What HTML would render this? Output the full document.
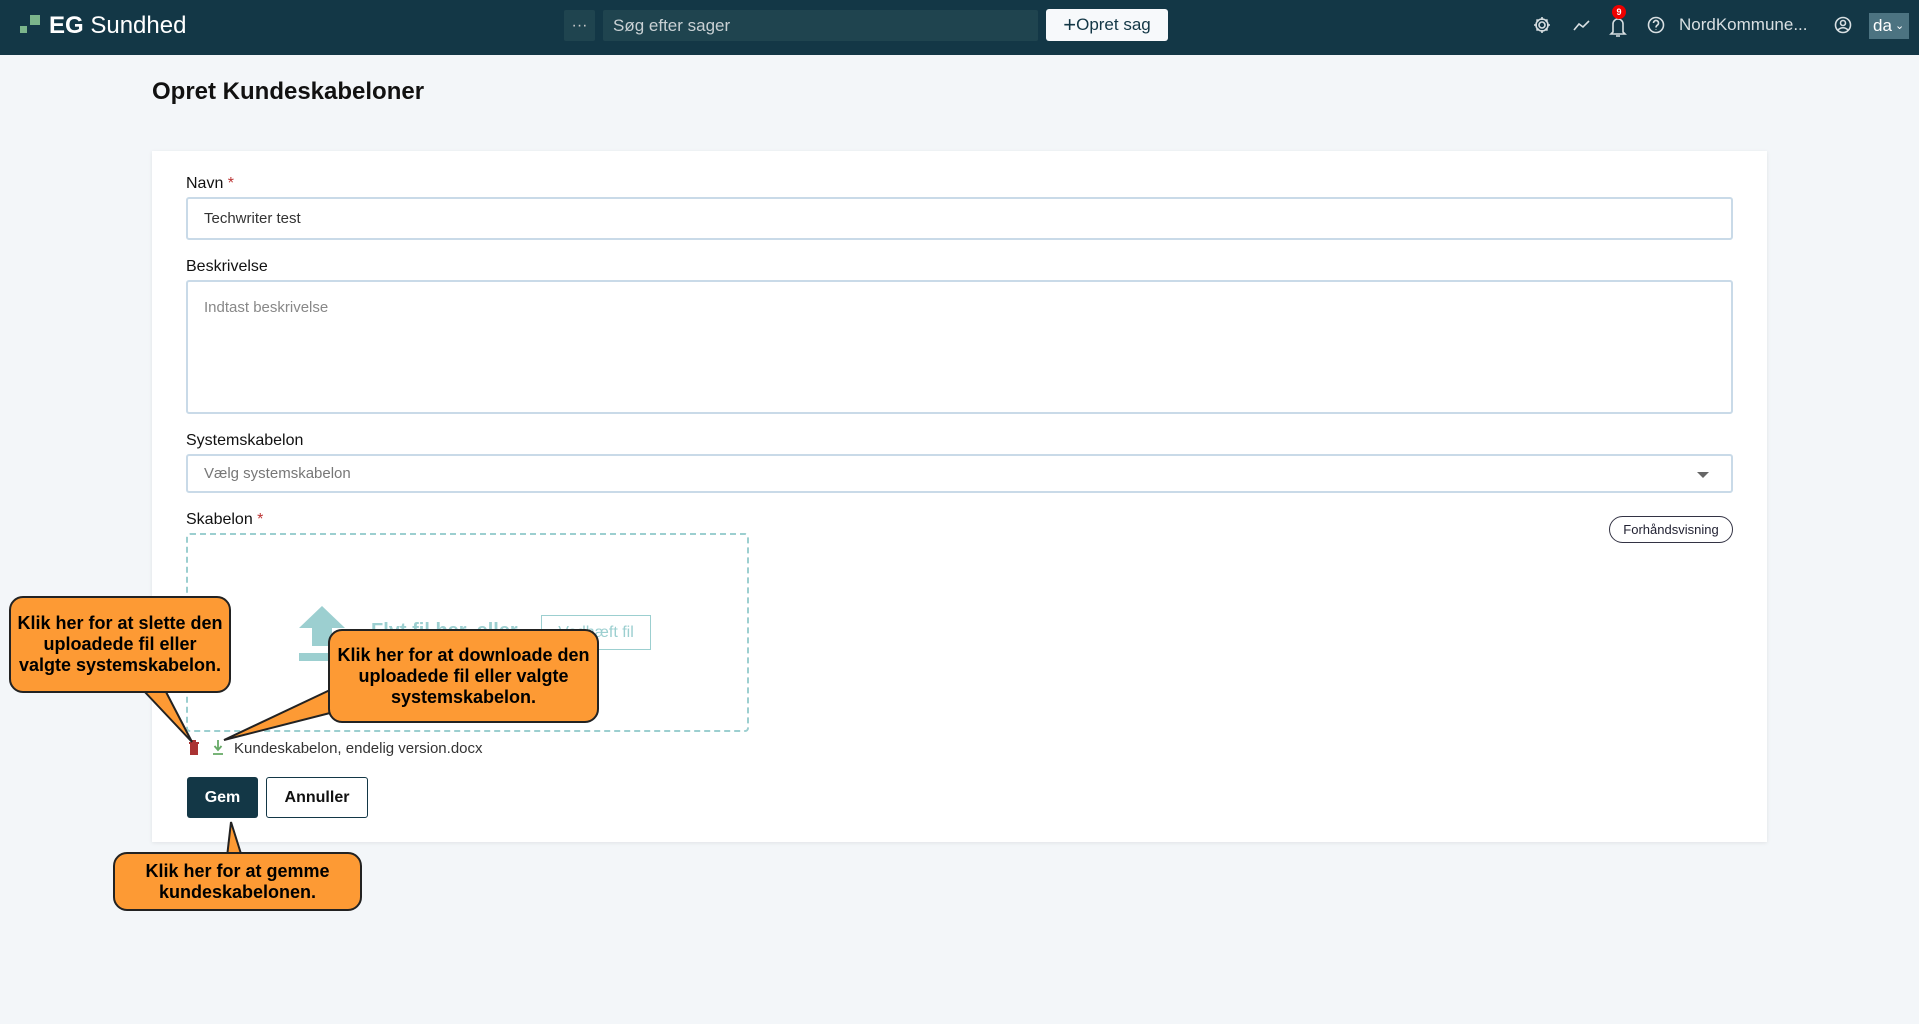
<!DOCTYPE html>
<html><head><meta charset="utf-8"><style>
*{box-sizing:border-box;margin:0;padding:0}
body{width:1919px;height:1024px;background:#f3f6f9;font-family:"Liberation Sans",sans-serif;position:relative;overflow:hidden;color:#111}
.abs{position:absolute}
.hdr{left:0;top:0;width:1919px;height:55px;background:#133746}
.lbl{font-size:16px;color:#111}
.inp{background:#fff;border:2px solid #c9dae8;border-radius:3px}
.call{position:absolute;background:#fd9a34;border:2px solid #222;border-radius:14px;font-weight:bold;font-size:18px;line-height:21px;text-align:center;color:#000;display:flex;align-items:center;justify-content:center}
</style></head><body>
<div class="abs hdr"></div>
<div class="abs" style="left:20px;top:26px;width:7px;height:7px;background:#7bb58b"></div>
<div class="abs" style="left:30px;top:15px;width:10px;height:10px;background:#7bb58b"></div>
<div class="abs" style="left:49px;top:11px;color:#fff;font-size:24px;line-height:30px"><b>EG</b> Sundhed</div>
<div class="abs" style="left:564px;top:10px;width:31px;height:31px;background:#1f444f;border-radius:2px;color:#ccc;text-align:center;font-size:16px;line-height:31px">···</div>
<div class="abs" style="left:603px;top:10px;width:435px;height:31px;background:#1f444f;border-radius:2px;color:#c9d1d4;font-size:17px;line-height:31px;padding-left:10px">Søg efter sager</div>
<div class="abs" style="left:1046px;top:9px;width:122px;height:32px;background:#f7f9fb;border-radius:3px;color:#133746;font-size:17px;line-height:32px;text-align:center"><span style="font-size:22px;vertical-align:-2px">+</span>Opret sag</div>
<svg class="abs" style="left:1532px;top:14px" width="390" height="30" viewBox="0 0 390 30" fill="none" stroke="#d8dfe2" stroke-width="1.6">
<circle cx="10" cy="11" r="3"/><path d="M10 3v3M10 16v3M2 11h3M15 11h3M4.5 5.5l2 2M13.5 14.5l2 2M4.5 16.5l2-2M13.5 7.5l2-2"/><circle cx="10" cy="11" r="6"/>
<path d="M42 16l5-6 4 3 6-6"/>
<path d="M81 18V10a5 5 0 0110 0v8l2 2H79zM84 22h4"/>
<circle cx="124" cy="11" r="7.5"/><path d="M121.5 9a2.5 2.5 0 114 2c-1 .7-1.5 1-1.5 2.5M124 15.5v.5"/>
<circle cx="311" cy="11" r="7.5"/><circle cx="311" cy="9" r="2.5"/><path d="M306 16c3-3 7-3 10 0"/>
</svg>
<div class="abs" style="left:1612px;top:5px;width:14px;height:14px;border-radius:7px;background:#e00;color:#fff;font-size:9px;line-height:14px;text-align:center;font-weight:bold">9</div>
<div class="abs" style="left:1679px;top:14px;color:#d8dfe2;font-size:17px;line-height:22px">NordKommune...</div>
<div class="abs" style="left:1869px;top:13px;width:40px;height:26px;background:#4c7381;color:#fff;font-size:17px;line-height:26px;padding-left:4px">da<span style="font-size:11px;vertical-align:2px"> ⌄</span></div>

<div class="abs" style="left:152px;top:78px;font-size:24px;font-weight:bold;color:#111">Opret Kundeskabeloner</div>
<div class="abs" style="left:152px;top:151px;width:1615px;height:691px;background:#fff;box-shadow:0 1px 4px rgba(0,0,0,.08)"></div>

<div class="abs lbl" style="left:186px;top:175px">Navn <span style="color:#b33">*</span></div>
<div class="abs inp" style="left:186px;top:197px;width:1547px;height:43px;font-size:15px;line-height:39px;padding-left:16px;color:#333">Techwriter test</div>
<div class="abs lbl" style="left:186px;top:258px">Beskrivelse</div>
<div class="abs inp" style="left:186px;top:280px;width:1547px;height:134px;font-size:15px;padding:17px 0 0 16px;color:#888">Indtast beskrivelse</div>
<div class="abs lbl" style="left:186px;top:432px">Systemskabelon</div>
<div class="abs inp" style="left:186px;top:454px;width:1547px;height:39px;font-size:15px;line-height:35px;padding-left:16px;color:#777">Vælg systemskabelon</div>
<div class="abs" style="left:1697px;top:472px;width:0;height:0;border-left:6px solid transparent;border-right:6px solid transparent;border-top:6px solid #666"></div>
<div class="abs lbl" style="left:186px;top:511px">Skabelon <span style="color:#b33">*</span></div>
<div class="abs" style="left:1609px;top:516px;width:124px;height:27px;border:1px solid #334;border-radius:14px;font-size:13px;line-height:25px;text-align:center;color:#223">Forhåndsvisning</div>

<div class="abs" style="left:186px;top:533px;width:563px;height:199px;border:2px dashed #9ccfd0;border-radius:4px"></div>
<svg class="abs" style="left:299px;top:606px" width="48" height="56"><path d="M23 0L46 22H33V40H13V22H0Z" fill="#9ccfd0"/><rect x="0" y="47" width="46" height="8" fill="#9ccfd0"/></svg>
<div class="abs" style="left:371px;top:620px;font-size:20px;font-weight:bold;color:#9ccfd0">Flyt fil her, eller</div>
<div class="abs" style="left:541px;top:615px;width:110px;height:35px;border:1px solid #9ccfd0;color:#9ccfd0;font-size:16px;line-height:33px;text-align:center">Vedhæft fil</div>

<svg class="abs" style="left:188px;top:739px" width="40" height="18"><rect x="1" y="3" width="10" height="2" fill="#a33"/><rect x="4" y="1" width="4" height="2" fill="#a33"/><rect x="2" y="5" width="8" height="11" fill="#a33"/><path d="M30 1v9M26.5 7l3.5 4 3.5-4M25 15h10" stroke="#6a6" stroke-width="1.8" fill="none"/></svg>
<div class="abs" style="left:234px;top:740px;font-size:15px;color:#333">Kundeskabelon, endelig version.docx</div>

<div class="abs" style="left:187px;top:777px;width:71px;height:41px;background:#133746;border-radius:3px;color:#fff;font-weight:bold;font-size:16px;line-height:41px;text-align:center">Gem</div>
<div class="abs" style="left:266px;top:777px;width:102px;height:41px;background:#fff;border:1px solid #133746;border-radius:3px;color:#111;font-weight:bold;font-size:16px;line-height:39px;text-align:center">Annuller</div>

<svg class="abs" style="left:0;top:0;pointer-events:none" width="1919" height="1024">
<path d="M143 690L192 742L165 690Z" fill="#fd9a34" stroke="#222" stroke-width="2"/>
<path d="M330 690L224 740L334 712Z" fill="#fd9a34" stroke="#222" stroke-width="2"/>
<path d="M227 857L231 822L242 857Z" fill="#fd9a34" stroke="#222" stroke-width="2"/>
</svg>
<div class="call" style="left:9px;top:596px;width:222px;height:97px">Klik her for at slette den<br>uploadede fil eller<br>valgte systemskabelon.</div>
<div class="call" style="left:328px;top:629px;width:271px;height:94px">Klik her for at downloade den<br>uploadede fil eller valgte<br>systemskabelon.</div>
<div class="call" style="left:113px;top:852px;width:249px;height:59px">Klik her for at gemme<br>kundeskabelonen.</div>
</body></html>
